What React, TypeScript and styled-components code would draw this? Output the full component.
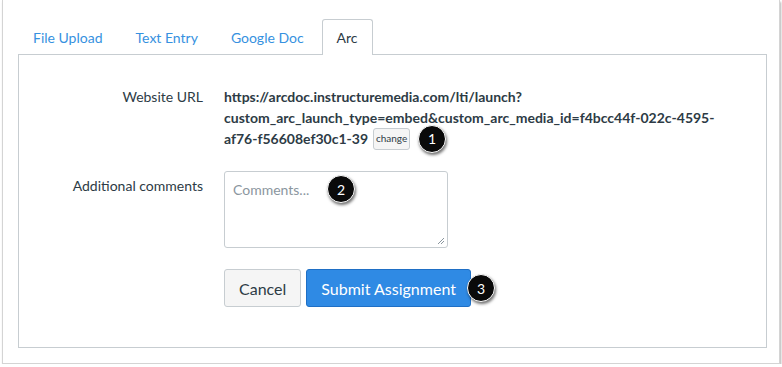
import React from "react";
import styled, { createGlobalStyle } from "styled-components";

const GlobalStyle = createGlobalStyle`
  html, body {
    margin: 0;
    padding: 0;
    background: #ffffff;
  }
  body {
    font-family: Lato, "Open Sans", sans-serif;
    color: #2d3b45;
  }
`;

const Frame = styled.div`
  box-sizing: border-box;
  margin-left: 2px;
  width: 778px;
  height: 364px;
  border: 1px solid #d4d4d4;
  border-top: none;
  box-shadow: 1px 2px 2px rgba(0, 0, 0, 0.3);
  padding: 19px 12px 0 15px;
  background: #fff;
`;

const TabBar = styled.div`
  display: flex;
  gap: 3px;
  height: 35px;
  position: relative;
  z-index: 1;
`;

const Tab = styled.div<{ $active?: boolean }>`
  box-sizing: border-box;
  height: ${(p) => (p.$active ? "36px" : "35px")};
  padding: 0 14px;
  display: flex;
  align-items: center;
  font-size: 14px;
  color: ${(p) => (p.$active ? "#2d3b45" : "#3691e0")};
  background: #fff;
  border: 1px solid ${(p) => (p.$active ? "#c7cdd1" : "transparent")};
  border-bottom: none;
  border-radius: 3px 3px 0 0;
`;

const Panel = styled.div`
  box-sizing: border-box;
  width: 749px;
  height: 294px;
  border: 1px solid #c7cdd1;
  padding-top: 31px;
`;

const Row = styled.div<{ $mt?: number }>`
  display: grid;
  grid-template-columns: 184px 1fr;
  column-gap: 21px;
  margin-top: ${(p) => p.$mt ?? 0}px;
`;

const Label = styled.div<{ $pt?: number }>`
  text-align: right;
  font-size: 14px;
  line-height: 21px;
  padding-top: ${(p) => p.$pt ?? 0}px;
`;

const UrlText = styled.div`
  font-size: 14px;
  line-height: 21px;
  font-weight: 700;
  color: #2d3b45;
`;

const LastLine = styled.div`
  display: flex;
  align-items: center;
  gap: 5px;
  height: 21px;
`;

const SmallButton = styled.span`
  box-sizing: border-box;
  display: inline-flex;
  align-items: center;
  justify-content: center;
  height: 22px;
  width: 37px;
  font-size: 10px;
  font-weight: 400;
  background: #f5f5f5;
  border: 1px solid #c7cdd1;
  border-radius: 3px;
  color: #2d3b45;
  flex-shrink: 0;
`;

const Badge = styled.span`
  box-sizing: border-box;
  width: 28px;
  height: 28px;
  border-radius: 50%;
  background: #0a0a0a;
  border: 1px solid #fff;
  color: #fff;
  font-size: 14px;
  font-weight: 400;
  display: inline-flex;
  align-items: center;
  justify-content: center;
  flex-shrink: 0;
  box-shadow: 1px 2px 3px rgba(0, 0, 0, 0.55);
`;

const InlineBadge = styled(Badge)`
  margin-left: 3px;
`;

const FieldWrap = styled.div`
  position: relative;
  width: 224px;
`;

const TextArea = styled.div`
  box-sizing: border-box;
  width: 224px;
  height: 77px;
  border: 1px solid #c7cdd1;
  border-radius: 3px;
  padding: 7px 8px;
  font-size: 14px;
  line-height: 21px;
  color: #8b969e;
  position: relative;
`;

const Grip = styled.svg`
  position: absolute;
  right: 2px;
  bottom: 2px;
`;

const FloatBadge = styled(Badge)<{ $x: number; $y: number }>`
  position: absolute;
  left: ${(p) => p.$x}px;
  top: ${(p) => p.$y}px;
`;

const Actions = styled.div`
  display: flex;
  align-items: center;
  gap: 5px;
`;

const Button = styled.div<{ $primary?: boolean }>`
  box-sizing: border-box;
  height: 38px;
  padding: 0 14px;
  display: flex;
  align-items: center;
  font-size: 16px;
  border-radius: 3px;
  border: 1px solid ${(p) => (p.$primary ? "#1f6fc5" : "#c7cdd1")};
  background: ${(p) => (p.$primary ? "#2f8ae4" : "#f5f5f5")};
  color: ${(p) => (p.$primary ? "#ffffff" : "#2d3b45")};
`;

const SubmitWrap = styled.div`
  display: flex;
  align-items: center;
`;

const TrailBadge = styled(Badge)`
  margin-left: -4px;
`;

export default function App() {
  return (
    <>
      <GlobalStyle />
      <Frame>
        <TabBar>
          <Tab>File Upload</Tab>
          <Tab>Text Entry</Tab>
          <Tab>Google Doc</Tab>
          <Tab $active>Arc</Tab>
        </TabBar>
        <Panel>
          <Row>
            <Label>Website URL</Label>
            <UrlText>
              <div>https://arcdoc.instructuremedia.com/lti/launch?</div>
              <div>custom_arc_launch_type=embed&amp;custom_arc_media_id=f4bcc44f-022c-4595-</div>
              <LastLine>
                <span>af76-f56608ef30c1-39</span>
                <SmallButton>change</SmallButton>
                <InlineBadge>1</InlineBadge>
              </LastLine>
            </UrlText>
          </Row>
          <Row $mt={22}>
            <Label $pt={4}>Additional comments</Label>
            <FieldWrap>
              <TextArea>
                Comments...
                <Grip width="8" height="8" viewBox="0 0 8 8">
                  <path d="M7 1 L1 7 M7 4 L4 7" stroke="#8b969e" strokeWidth="1" />
                </Grip>
              </TextArea>
              <FloatBadge $x={103} $y={4}>2</FloatBadge>
            </FieldWrap>
          </Row>
          <Row $mt={21}>
            <div />
            <Actions>
              <Button>Cancel</Button>
              <SubmitWrap>
                <Button $primary>Submit Assignment</Button>
                <TrailBadge>3</TrailBadge>
              </SubmitWrap>
            </Actions>
          </Row>
        </Panel>
      </Frame>
    </>
  );
}
